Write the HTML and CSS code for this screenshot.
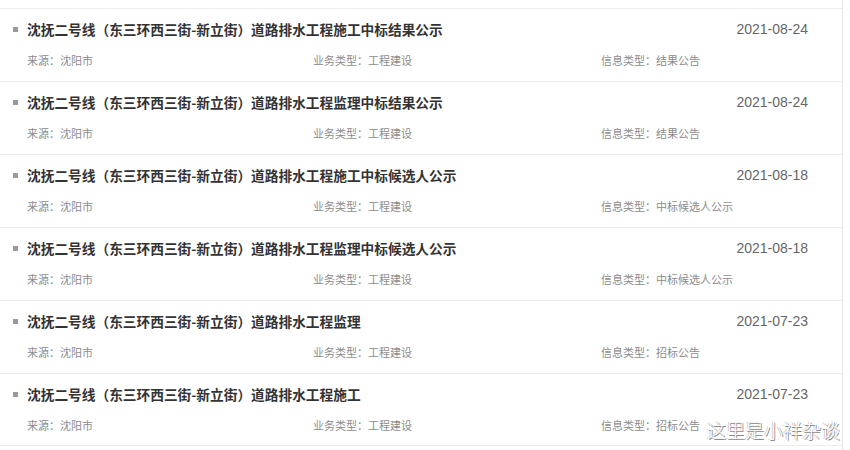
FILE: index.html
```html
<!DOCTYPE html>
<html lang="zh-CN">
<head>
    <meta charset="UTF-8">
    <meta name="viewport" content="width=device-width, initial-scale=1.0">
    <title>公告列表</title>
    <link rel="stylesheet" href="styles.css">
</head>
<body>
    <div class="list">
        <div class="item">
            <div class="head">
                <span class="dot"></span>
                <span class="title">沈抚二号线（东三环西三街-新立街）道路排水工程施工中标结果公示</span>
                <span class="date">2021-08-24</span>
            </div>
            <div class="meta">
                <span>来源：沈阳市</span>
                <span>业务类型：工程建设</span>
                <span>信息类型：结果公告</span>
            </div>
        </div>
        <div class="item">
            <div class="head">
                <span class="dot"></span>
                <span class="title">沈抚二号线（东三环西三街-新立街）道路排水工程监理中标结果公示</span>
                <span class="date">2021-08-24</span>
            </div>
            <div class="meta">
                <span>来源：沈阳市</span>
                <span>业务类型：工程建设</span>
                <span>信息类型：结果公告</span>
            </div>
        </div>
        <div class="item">
            <div class="head">
                <span class="dot"></span>
                <span class="title">沈抚二号线（东三环西三街-新立街）道路排水工程施工中标候选人公示</span>
                <span class="date">2021-08-18</span>
            </div>
            <div class="meta">
                <span>来源：沈阳市</span>
                <span>业务类型：工程建设</span>
                <span>信息类型：中标候选人公示</span>
            </div>
        </div>
        <div class="item">
            <div class="head">
                <span class="dot"></span>
                <span class="title">沈抚二号线（东三环西三街-新立街）道路排水工程监理中标候选人公示</span>
                <span class="date">2021-08-18</span>
            </div>
            <div class="meta">
                <span>来源：沈阳市</span>
                <span>业务类型：工程建设</span>
                <span>信息类型：中标候选人公示</span>
            </div>
        </div>
        <div class="item">
            <div class="head">
                <span class="dot"></span>
                <span class="title">沈抚二号线（东三环西三街-新立街）道路排水工程监理</span>
                <span class="date">2021-07-23</span>
            </div>
            <div class="meta">
                <span>来源：沈阳市</span>
                <span>业务类型：工程建设</span>
                <span>信息类型：招标公告</span>
            </div>
        </div>
        <div class="item">
            <div class="head">
                <span class="dot"></span>
                <span class="title">沈抚二号线（东三环西三街-新立街）道路排水工程施工</span>
                <span class="date">2021-07-23</span>
            </div>
            <div class="meta">
                <span>来源：沈阳市</span>
                <span>业务类型：工程建设</span>
                <span>信息类型：招标公告</span>
            </div>
        </div>
    </div>
    <div class="watermark">这里是小祥杂谈</div>
</body>
</html>
```

FILE: styles.css
```css
body {
    margin: 0;
    background: #fff;
    font-family: "Noto Sans CJK SC", "Liberation Sans", sans-serif;
}

.list {
    width: 842px;
    padding-top: 8px;
    border-right: 1px solid #e8e8e8;
    min-height: 442px;
}

.item {
    box-sizing: border-box;
    height: 73px;
    padding: 11px 34px 0 13px;
    border-top: 1px solid #ededed;
}

.item:last-child {
    border-bottom: 1px solid #ededed;
}

.head {
    display: flex;
    align-items: center;
    height: 18px;
}

.dot {
    width: 5px;
    height: 5px;
    background: #9a9a9a;
    margin-right: 9px;
    flex: none;
}

.title {
    flex: 1;
    font-size: 13.7px;
    font-weight: bold;
    color: #333;
    line-height: 18px;
    white-space: nowrap;
}

.date {
    font-family: "Liberation Sans", sans-serif;
    font-size: 14px;
    color: #666;
}

.meta {
    display: grid;
    grid-template-columns: 286px 288px auto;
    margin-top: 14px;
    padding-left: 14px;
    font-size: 11px;
    line-height: 16px;
    color: #8c8c8c;
}

.watermark {
    position: absolute;
    left: 707px;
    top: 416px;
    font-size: 19px;
    font-weight: 300;
    color: #fbfbfb;
    text-shadow: 1px 1px 0 #8a8a8a, -1px 0 0 #c8c8c8;
}
```
